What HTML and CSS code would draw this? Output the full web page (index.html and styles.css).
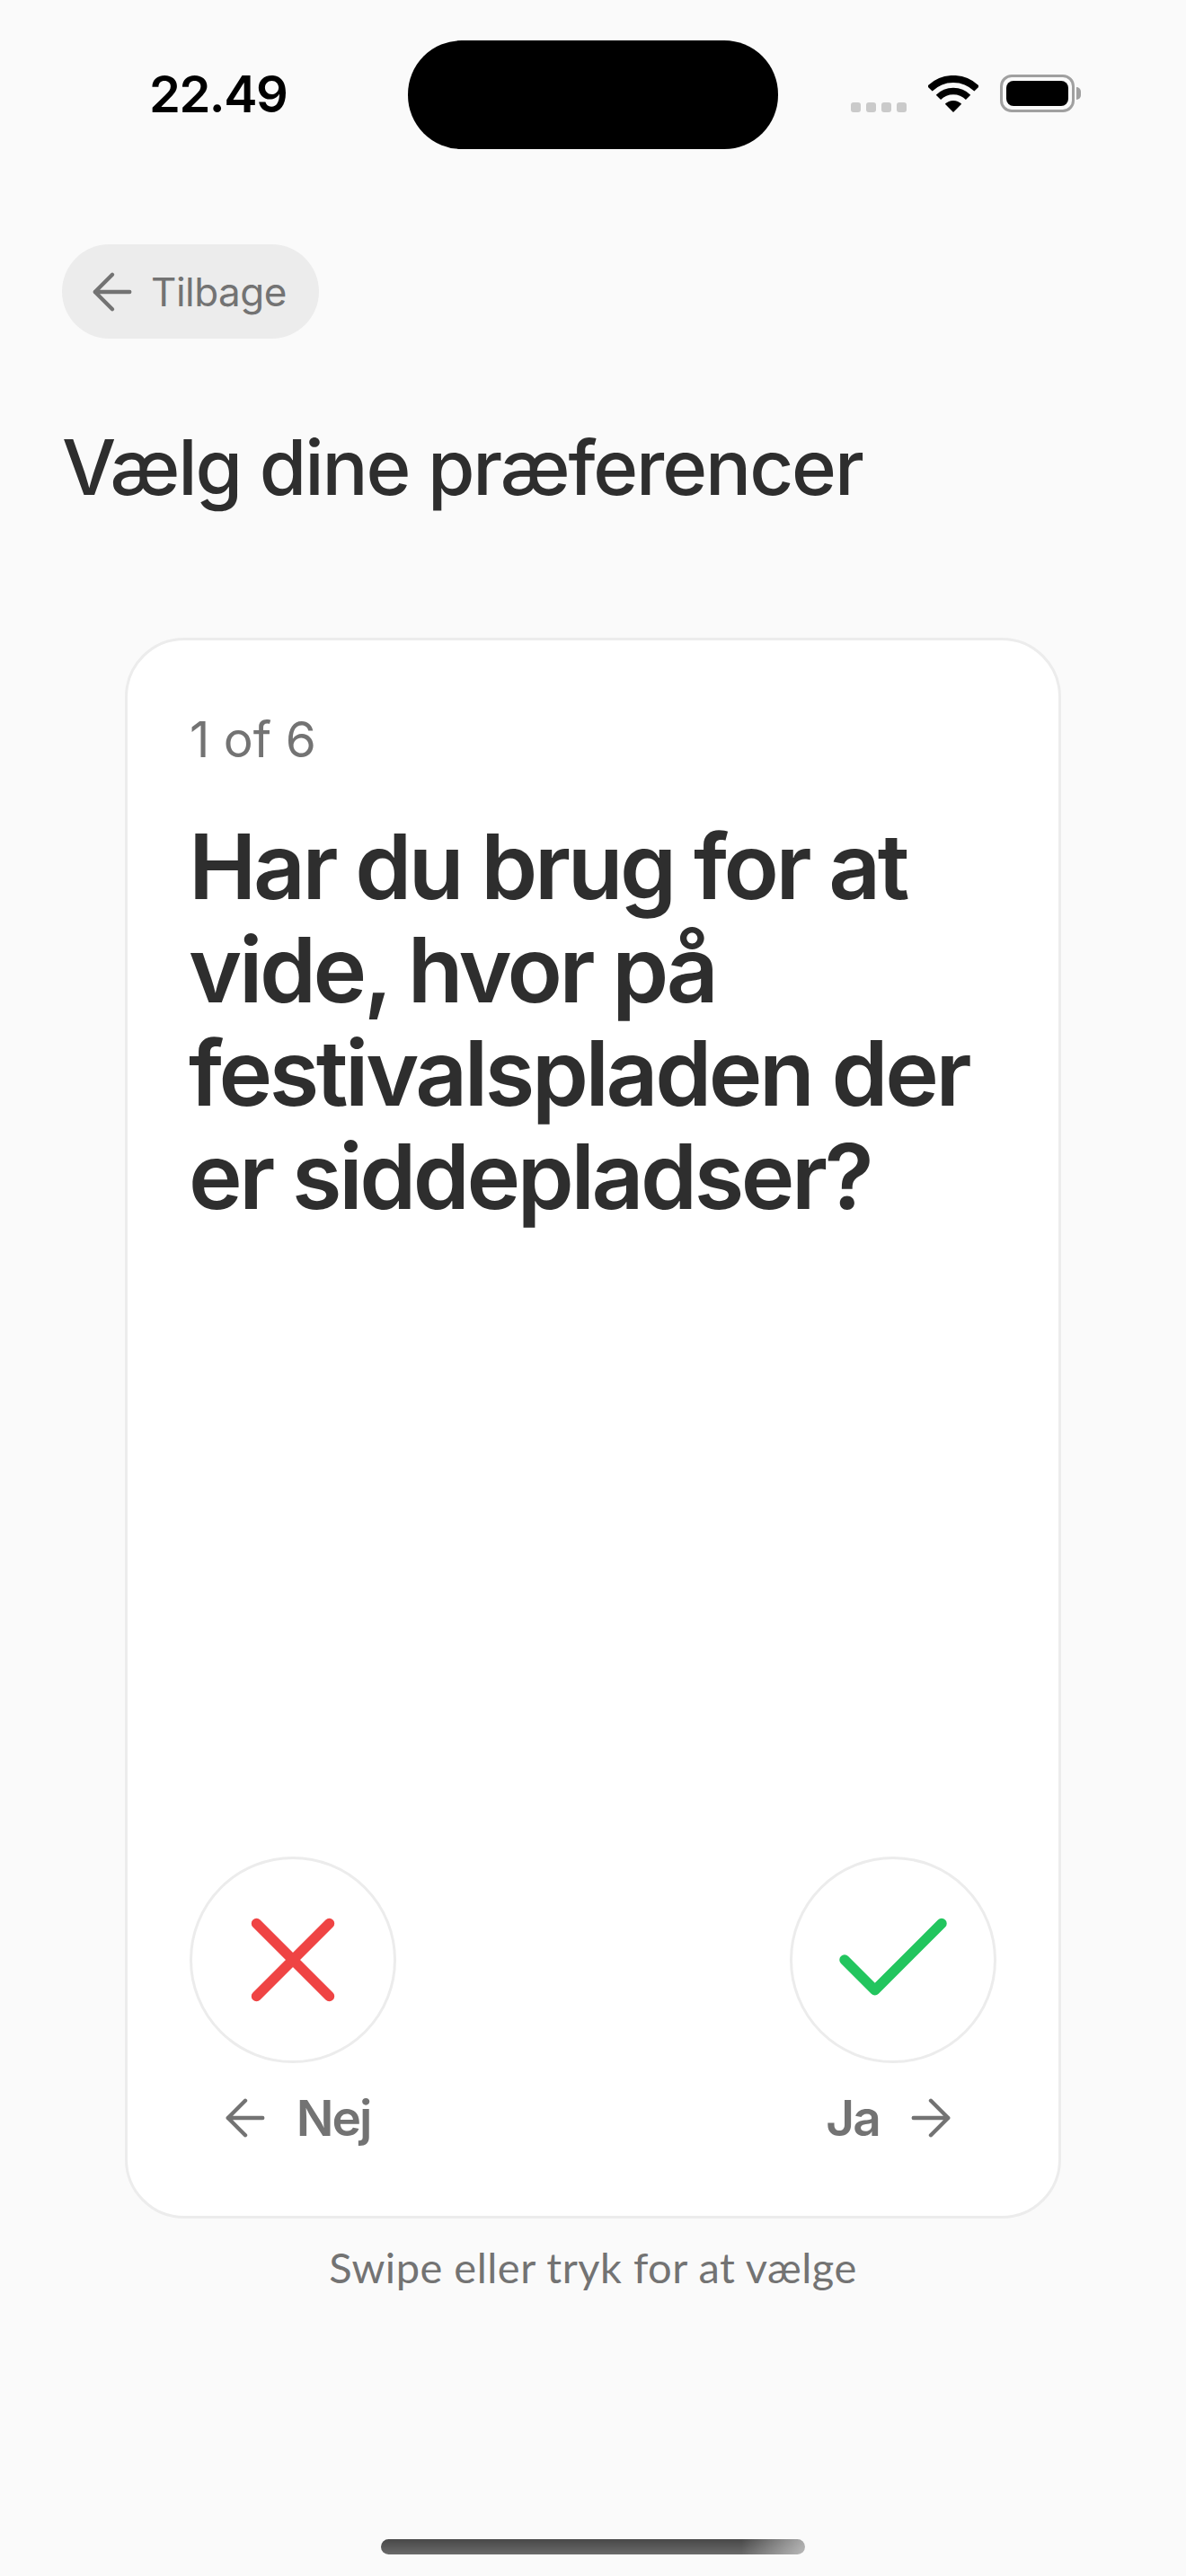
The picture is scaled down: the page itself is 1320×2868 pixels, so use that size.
FILE: index.html
```html
<!DOCTYPE html>
<html lang="da">
<head>
    <meta charset="UTF-8">
    <meta name="viewport" content="width=device-width, initial-scale=1.0">
    <title>Vælg dine præferencer</title>
    <link rel="stylesheet" href="styles.css">
</head>
<body>
    <div class="screen">
        <div class="status-bar">
            <div class="time">22.49</div>
            <div class="island"></div>
            <div class="status-icons">
                <div class="signal">
                    <span class="signal-dot"></span>
                    <span class="signal-dot"></span>
                    <span class="signal-dot"></span>
                    <span class="signal-dot"></span>
                </div>
                <svg class="wifi" width="56" height="41" viewBox="0 0 56 41">
                    <path d="M28 41 18.8 31.8A13 13 0 0 1 37.2 31.8Z" fill="#000"/>
                    <path d="M11.4 24.4A23.5 23.5 0 0 1 44.6 24.4" fill="none" stroke="#000" stroke-width="7.5"/>
                    <path d="M1.8 14.8A37 37 0 0 1 54.2 14.8" fill="none" stroke="#000" stroke-width="8"/>
                </svg>
                <div class="battery">
                    <div class="battery-body"><div class="battery-fill"></div></div>
                    <div class="battery-nub"></div>
                </div>
            </div>
        </div>

        <div class="back-btn">
            <svg class="arrow" viewBox="0 0 24 24"><path d="M12 19l-7-7 7-7M19 12H5"/></svg>
            <span>Tilbage</span>
        </div>

        <h1 class="page-title">Vælg dine præferencer</h1>

        <div class="card">
            <div class="progress">1 of 6</div>
            <h2 class="question">Har du brug for at vide, hvor på festivalspladen der er siddepladser?</h2>

            <div class="actions">
                <div class="action">
                    <div class="action-circle">
                        <svg class="action-icon icon-no" viewBox="0 0 24 24"><path d="M18 6 6 18M6 6l12 12"/></svg>
                    </div>
                    <div class="action-label">
                        <svg class="arrow" viewBox="0 0 24 24"><path d="M12 19l-7-7 7-7M19 12H5"/></svg>
                        <span>Nej</span>
                    </div>
                </div>
                <div class="action">
                    <div class="action-circle">
                        <svg class="action-icon icon-yes" viewBox="0 0 24 24"><path d="M20 6 9 17l-5-5"/></svg>
                    </div>
                    <div class="action-label">
                        <span>Ja</span>
                        <svg class="arrow" viewBox="0 0 24 24"><path d="M5 12h14M12 5l7 7-7 7"/></svg>
                    </div>
                </div>
            </div>
        </div>

        <p class="hint">Swipe eller tryk for at vælge</p>

        <div class="home-bar"></div>
    </div>
</body>
</html>
```

FILE: styles.css
```css
body {
    margin: 0;
    background-color: #fafafa;
    font-family: Inter, 'Liberation Sans', sans-serif;
}

.screen {
    display: flex;
    flex-direction: column;
    height: 2868px;
    box-sizing: border-box;
    overflow: hidden;
}

/* status bar */
.status-bar {
    display: flex;
    align-items: flex-start;
    padding-top: 45px;
}

.time {
    width: 288px;
    padding-left: 166px;
    margin-top: 30px;
    font-size: 56px;
    line-height: 60px;
    font-weight: 600;
    color: #000;
    letter-spacing: -1.5px;
}

.island {
    width: 412px;
    height: 121px;
    background-color: #000;
    border-radius: 60px;
}

.status-icons {
    display: flex;
    align-items: flex-end;
    margin: 38px 0 0 81px;
}

.signal {
    display: flex;
    gap: 6px;
    margin-right: 24px;
}

.signal-dot {
    width: 11px;
    height: 11px;
    border-radius: 3px;
    background-color: #cacaca;
}

.battery {
    display: flex;
    align-items: center;
    margin-left: 24px;
}

.battery-body {
    width: 83px;
    height: 42px;
    box-sizing: border-box;
    padding: 4px;
    border: 3px solid #a0a0a0;
    border-radius: 13px;
}

.battery-fill {
    height: 100%;
    background-color: #000;
    border-radius: 8px;
}

.battery-nub {
    width: 5px;
    height: 14px;
    margin-left: 2px;
    background-color: #a0a0a0;
    border-radius: 0 5px 5px 0;
}

/* icons */
.arrow {
    width: 66px;
    height: 66px;
    flex-shrink: 0;
    fill: none;
    stroke: #737373;
    stroke-width: 1.6;
    stroke-linecap: round;
    stroke-linejoin: round;
}

/* header */
.back-btn {
    display: flex;
    align-items: center;
    gap: 10px;
    align-self: flex-start;
    box-sizing: border-box;
    width: 286px;
    height: 105px;
    margin: 106px 0 0 69px;
    padding-left: 23px;
    background-color: #ececec;
    border-radius: 53px;
    font-size: 44px;
    letter-spacing: -0.5px;
    color: #737373;
}

.page-title {
    margin: 92px 0 0 69px;
    font-size: 85px;
    line-height: 103px;
    font-weight: 500;
    letter-spacing: -2.1px;
    color: #2e2e2e;
}

/* card */
.card {
    display: flex;
    flex-direction: column;
    box-sizing: border-box;
    width: 1042px;
    height: 1760px;
    margin: 138px 0 0 139px;
    padding: 78px 69px 0;
    background-color: #fff;
    border: 3px solid #ececec;
    border-radius: 66px;
}

.progress {
    font-size: 55px;
    line-height: 64px;
    color: #737373;
}

.question {
    margin: 52px 0 0 -1px;
    font-size: 101px;
    line-height: 115px;
    font-weight: 600;
    letter-spacing: -3.4px;
    color: #2e2e2e;
}

.actions {
    display: flex;
    justify-content: space-between;
    margin-top: auto;
    margin-bottom: 76px;
}

.action {
    display: flex;
    flex-direction: column;
    align-items: center;
    gap: 28px;
    width: 230px;
}

.action-circle {
    display: flex;
    align-items: center;
    justify-content: center;
    box-sizing: border-box;
    width: 230px;
    height: 230px;
    border: 3px solid #ececec;
    border-radius: 50%;
}

.action-icon {
    width: 162px;
    height: 162px;
    fill: none;
    stroke-width: 1.7;
    stroke-linecap: round;
    stroke-linejoin: round;
}

.icon-no {
    stroke: #ef4444;
}

.icon-yes {
    stroke: #22c55e;
}

.action-label {
    display: flex;
    align-items: center;
    gap: 24px;
    font-size: 55px;
    font-weight: 600;
    letter-spacing: -2px;
    color: #737373;
}

/* footer */
.hint {
    margin: 26px 0 0;
    text-align: center;
    font-family: Lato, sans-serif;
    font-size: 47px;
    line-height: 56px;
    letter-spacing: 0.5px;
    color: #737373;
}

.home-bar {
    align-self: center;
    width: 472px;
    height: 17px;
    margin-top: auto;
    margin-bottom: 24px;
    border-radius: 9px;
    background: linear-gradient(to right, rgba(250, 250, 250, 0) 85%, rgba(250, 250, 250, 0.55) 100%),
        linear-gradient(to bottom, #484848, #6a6a6a);
}
```
